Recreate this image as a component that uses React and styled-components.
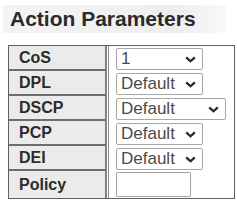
import React from "react";
import styled, { createGlobalStyle } from "styled-components";

const GlobalStyle = createGlobalStyle`
	body {
		margin: 0;
		background: #fff;
		font-family: "Liberation Sans", Arial, sans-serif;
	}
`;

const Page = styled.div`
	width: 237px;
	height: 201px;
	overflow: hidden;
	padding-top: 5px;
	box-sizing: border-box;
`;

const Title = styled.h2`
	margin: 0 10px 0 3px;
	height: 28px;
	padding-left: 7px;
	display: flex;
	align-items: center;
	font-size: 21px;
	font-weight: bold;
	color: #2a2a2a;
	background: linear-gradient(to right, #f4f4f4, #eeeeee 80%, #fafafa);
`;

const Table = styled.table`
	margin: 12px 0 0 8px;
	width: 227px;
	border: 1px solid #606060;
	border-collapse: separate;
	border-spacing: 0;
`;

const Label = styled.td`
	width: 86px;
	padding: 0 0 0 10px;
	border-right: 1px solid #7a7a7a;
	border-bottom: ${(p) => (p.$last ? "none" : "2px solid #6e6e6e")};
	background: #ebebeb;
	color: #2b2b2b;
	font-size: 16px;
	font-weight: bold;
	vertical-align: middle;
`;

const Value = styled.td`
	padding: 0 0 0 7px;
	border-left: 3px double #8a8a8a;
`;

const Cell = styled.div`
	height: ${(p) => p.$h || 25}px;
	display: flex;
	align-items: center;
`;

const SelectWrap = styled.span`
	position: relative;
	display: inline-block;
`;

const Select = styled.select`
	appearance: none;
	-webkit-appearance: none;
	display: block;
	width: ${(p) => p.$w}px;
	height: 22px;
	padding: 0 0 0 4px;
	border: 1px solid #a8a8a8;
	border-radius: 2px;
	background: #fff;
	color: #4a4a4a;
	font-family: "Liberation Sans", Arial, sans-serif;
	font-size: 17px;
	line-height: 20px;
`;

const Chevron = styled.svg`
	position: absolute;
	right: 7px;
	top: 8px;
	pointer-events: none;
`;

const Input = styled.input`
	display: block;
	width: 75px;
	height: 25px;
	box-sizing: border-box;
	border: 1px solid #a5a5a5;
	border-radius: 1px;
`;

function Dropdown({ value, options, width }) {
	return (
		<SelectWrap>
			<Select $w={width} defaultValue={value}>
				{options.map((o) => (
					<option key={o}>{o}</option>
				))}
			</Select>
			<Chevron width="11" height="7" viewBox="0 0 11 7">
				<path d="M1.2 1.3 L5.5 5.3 L9.8 1.3" fill="none" stroke="#2a2a2a" strokeWidth="2.3" />
			</Chevron>
		</SelectWrap>
	);
}

const rows = [
	{ label: "CoS", value: "1", options: ["Default", "0", "1", "2", "3", "4", "5", "6", "7"], width: 87 },
	{ label: "DPL", value: "Default", options: ["Default", "0", "1"], width: 87 },
	{ label: "DSCP", value: "Default", options: ["Default", "0", "1"], width: 110 },
	{ label: "PCP", value: "Default", options: ["Default", "0", "1"], width: 87 },
	{ label: "DEI", value: "Default", options: ["Default", "0", "1"], width: 87 },
];

export default function App() {
	return (
		<Page>
			<GlobalStyle />
			<Title>Action Parameters</Title>
			<Table>
				<tbody>
					{rows.map((r) => (
						<tr key={r.label}>
							<Label>{r.label}</Label>
							<Value>
								<Cell>
									<Dropdown value={r.value} options={r.options} width={r.width} />
								</Cell>
							</Value>
						</tr>
					))}
					<tr>
						<Label $last>Policy</Label>
						<Value>
							<Cell $h={27}>
								<Input type="text" />
							</Cell>
						</Value>
					</tr>
				</tbody>
			</Table>
		</Page>
	);
}
